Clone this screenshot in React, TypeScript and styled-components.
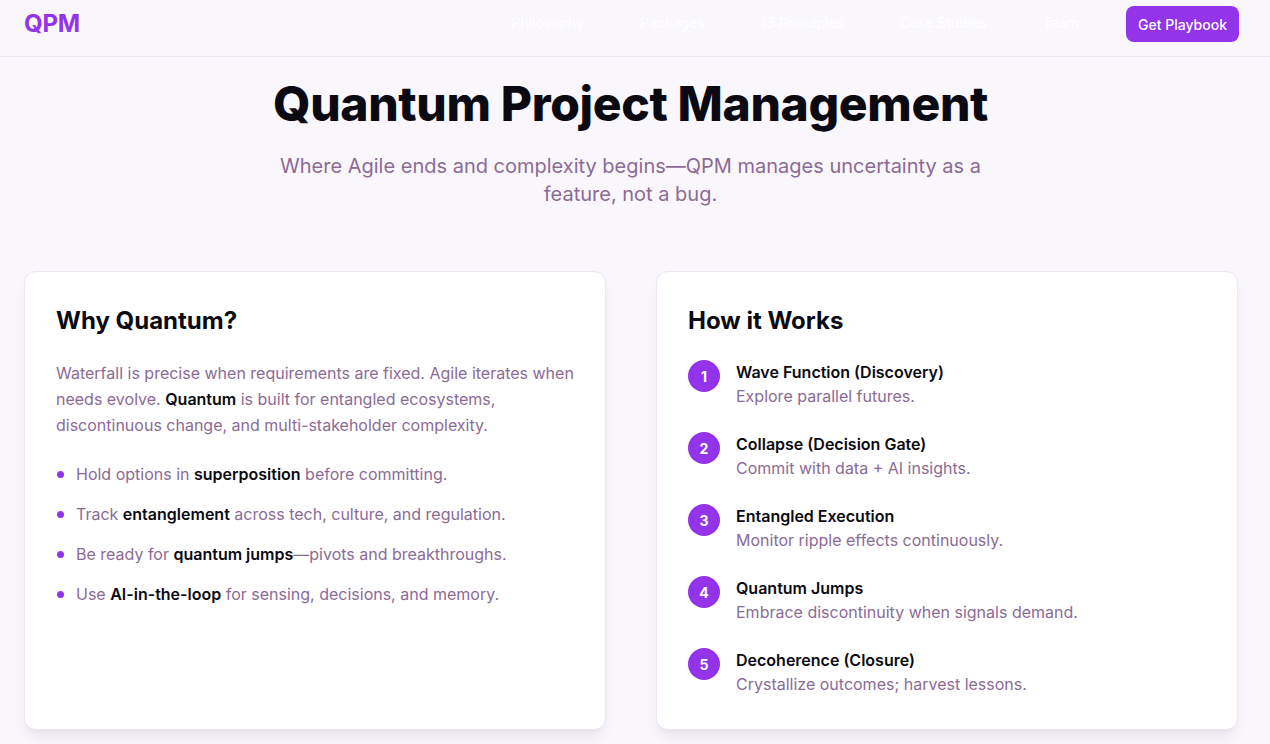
import React from "react";
import styled, { createGlobalStyle } from "styled-components";

const GlobalStyle = createGlobalStyle`
  * { box-sizing: border-box; }
  html, body { margin: 0; padding: 0; }
  body {
    background: #faf7fc;
    font-family: Inter, "Noto Sans", sans-serif;
    color: #0b0a12;
    -webkit-font-smoothing: antialiased;
  }
`;

const Page = styled.div`
  min-height: 100vh;
  background: #faf7fc;
`;

const NavBar = styled.header`
  height: 57px;
  border-bottom: 1px solid #efe3f4;
  background: #faf7fc;
  display: flex;
  align-items: center;
  padding: 0 31px 8px 24px;
`;

const Logo = styled.div`
  font-size: 24px;
  font-weight: 700;
  color: #9333ea;
  letter-spacing: -0.2px;
  flex: 1;
  line-height: 1;
`;

const NavLinks = styled.nav`
  display: flex;
  align-items: center;
  gap: 56px;
  margin-right: 47px;
  padding-bottom: 3px;
`;

const NavLink = styled.a`
  font-size: 14px;
  color: #ffffff;
  text-decoration: none;
`;

const CtaButton = styled.button`
  background: #9333ea;
  color: #fff;
  border: none;
  border-radius: 8px;
  font-family: inherit;
  font-size: 14px;
  font-weight: 500;
  height: 36px;
  padding: 0 12px;
`;

const Hero = styled.section`
  display: flex;
  flex-direction: column;
  align-items: center;
  text-align: center;
  padding: 19px 9px 0 0;
`;

const Title = styled.h1`
  margin: 0;
  font-size: 48px;
  line-height: 56px;
  font-weight: 800;
  letter-spacing: -0.35px;
  color: #0b0a12;
`;

const Subtitle = styled.p`
  margin: 20px 0 0;
  max-width: 720px;
  font-size: 20px;
  line-height: 28px;
  color: #8b6b96;
`;

const Grid = styled.section`
  display: grid;
  grid-template-columns: 1fr 1fr;
  gap: 50px;
  padding: 0 32px 0 24px;
  margin-top: 63px;
`;

const Card = styled.div`
  background: #fff;
  border: 1px solid #efe3f4;
  border-radius: 12px;
  padding: 33px 31px 33px 31px;
  box-shadow: 0 10px 15px -3px rgba(60, 30, 80, 0.08), 0 4px 6px -4px rgba(60, 30, 80, 0.08);
`;

const CardTitle = styled.h2`
  margin: 0 0 23px;
  font-size: 24px;
  line-height: 32px;
  font-weight: 700;
  color: #0b0a12;
`;

const Body = styled.p`
  margin: 0 0 24px;
  font-size: 16px;
  line-height: 26px;
  color: #8b6b96;
`;

const Strong = styled.strong`
  color: #0b0a12;
  font-weight: 600;
`;

const BulletList = styled.ul`
  list-style: none;
  margin: 0;
  padding: 0;
  display: flex;
  flex-direction: column;
  gap: 16px;
`;

const BulletItem = styled.li`
  display: flex;
  align-items: center;
  gap: 12px;
  font-size: 16px;
  line-height: 24px;
  color: #8b6b96;
`;

const Dot = styled.span`
  width: 7px;
  height: 7px;
  border-radius: 50%;
  background: #9333ea;
  flex-shrink: 0;
  margin-left: 1px;
`;

const Steps = styled.ol`
  list-style: none;
  margin: 0;
  padding: 0;
  display: flex;
  flex-direction: column;
  gap: 24px;
`;

const Step = styled.li`
  display: flex;
  align-items: flex-start;
  gap: 16px;
`;

const StepNum = styled.span`
  width: 32px;
  height: 32px;
  border-radius: 50%;
  background: #9333ea;
  color: #fff;
  font-size: 14px;
  font-weight: 700;
  display: flex;
  align-items: center;
  justify-content: center;
  flex-shrink: 0;
`;

const StepText = styled.div`
  display: flex;
  flex-direction: column;
`;

const StepTitle = styled.div`
  font-size: 16px;
  line-height: 24px;
  font-weight: 600;
  color: #0b0a12;
`;

const StepDesc = styled.div`
  font-size: 16px;
  line-height: 24px;
  color: #8b6b96;
`;

const steps = [
  ["Wave Function (Discovery)", "Explore parallel futures."],
  ["Collapse (Decision Gate)", "Commit with data + AI insights."],
  ["Entangled Execution", "Monitor ripple effects continuously."],
  ["Quantum Jumps", "Embrace discontinuity when signals demand."],
  ["Decoherence (Closure)", "Crystallize outcomes; harvest lessons."],
];

export default function App() {
  return (
    <Page>
      <GlobalStyle />
      <NavBar>
        <Logo>QPM</Logo>
        <NavLinks>
          <NavLink href="#">Philosophy</NavLink>
          <NavLink href="#">Packages</NavLink>
          <NavLink href="#">13 Principles</NavLink>
          <NavLink href="#">Case Studies</NavLink>
          <NavLink href="#">Team</NavLink>
        </NavLinks>
        <CtaButton>Get Playbook</CtaButton>
      </NavBar>
      <Hero>
        <Title>Quantum Project Management</Title>
        <Subtitle>
          Where Agile ends and complexity begins—QPM manages uncertainty as a feature, not a bug.
        </Subtitle>
      </Hero>
      <Grid>
        <Card>
          <CardTitle>Why Quantum?</CardTitle>
          <Body>
            Waterfall is precise when requirements are fixed. Agile iterates when needs evolve.{" "}
            <Strong>Quantum</Strong> is built for entangled ecosystems, discontinuous change, and
            multi-stakeholder complexity.
          </Body>
          <BulletList>
            <BulletItem>
              <Dot />
              <span>
                Hold options in <Strong>superposition</Strong> before committing.
              </span>
            </BulletItem>
            <BulletItem>
              <Dot />
              <span>
                Track <Strong>entanglement</Strong> across tech, culture, and regulation.
              </span>
            </BulletItem>
            <BulletItem>
              <Dot />
              <span>
                Be ready for <Strong>quantum jumps</Strong>—pivots and breakthroughs.
              </span>
            </BulletItem>
            <BulletItem>
              <Dot />
              <span>
                Use <Strong>AI-in-the-loop</Strong> for sensing, decisions, and memory.
              </span>
            </BulletItem>
          </BulletList>
        </Card>
        <Card>
          <CardTitle>How it Works</CardTitle>
          <Steps>
            {steps.map(([t, d], i) => (
              <Step key={t}>
                <StepNum>{i + 1}</StepNum>
                <StepText>
                  <StepTitle>{t}</StepTitle>
                  <StepDesc>{d}</StepDesc>
                </StepText>
              </Step>
            ))}
          </Steps>
        </Card>
      </Grid>
    </Page>
  );
}
